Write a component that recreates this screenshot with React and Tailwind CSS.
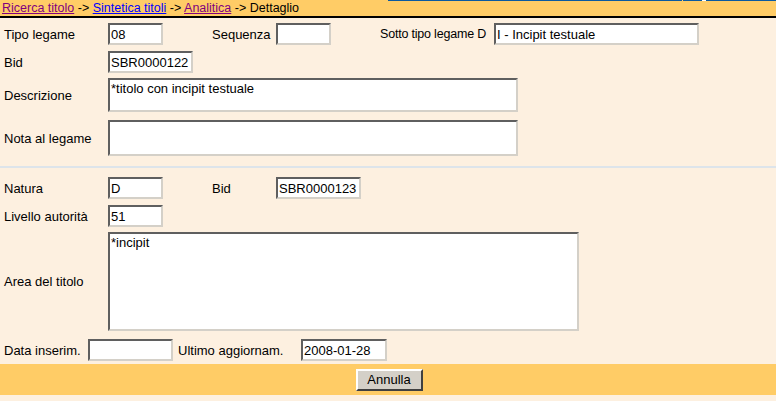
import React from "react";

const font = { fontFamily: '"Liberation Sans", Arial, sans-serif' };

function Input({ w, value, h = "h-[22px]" }) {
  return (
    <div
      className={`${w} ${h} shrink-0 bg-white border-2 border-t-[#5f5f5f] border-l-[#5f5f5f] border-b-[#d4d0c8] border-r-[#d4d0c8] flex items-center pl-[1px] text-[13px] text-black leading-none whitespace-nowrap overflow-hidden`}
    >
      {value}
    </div>
  );
}

function Area({ w, h, value }) {
  return (
    <div
      className={`${w} ${h} shrink-0 bg-white border-2 border-t-[#5f5f5f] border-l-[#5f5f5f] border-b-[#d4d0c8] border-r-[#d4d0c8] pl-[1px] pt-[1px] text-[13px] text-black leading-[15px]`}
    >
      {value}
    </div>
  );
}

function Label({ children, w = "w-[104px]" }) {
  return <div className={`${w} shrink-0 text-[13px] text-black leading-none whitespace-nowrap`}>{children}</div>;
}

export default function App() {
  return (
    <div className="w-[776px] h-[401px] bg-[#fdf0e0] overflow-hidden flex flex-col" style={font}>
      <div className="h-[18px] shrink-0 bg-[#ffcc66] border-b-2 border-black relative">
        <div className="absolute top-0 left-[388px] right-0 h-[1px] bg-[#0b5aa0]" />
        <div className="absolute top-0 left-[682px] w-[1px] h-[1px] bg-[#ffcc66]" />
        <div className="absolute top-0 left-[702px] w-[4px] h-[1px] bg-white" />
        <div className="pl-[2px] text-[12.5px] leading-[16px] text-black whitespace-nowrap">
          <span className="text-[#800080] underline">Ricerca titolo</span> -&gt;{" "}
          <span className="text-[#0000ff] underline">Sintetica titoli</span> -&gt;{" "}
          <span className="text-[#800080] underline">Analitica</span> -&gt; Dettaglio
        </div>
      </div>

      <div className="flex items-center mt-[5px] pl-[4px]">
        <Label>Tipo legame</Label>
        <Input w="w-[55px]" value="08" />
        <div className="w-[49px] shrink-0" />
        <Label w="w-[64px]">Sequenza</Label>
        <Input w="w-[55px]" value="" />
        <div className="w-[49px] shrink-0" />
        <Label w="w-[114px]">
          <span className="text-[12.5px] tracking-[-0.2px]">Sotto tipo legame D</span>
        </Label>
        <Input w="w-[205px]" value="I - Incipit testuale" />
      </div>

      <div className="flex items-center mt-[6px] pl-[4px]">
        <Label>Bid</Label>
        <Input w="w-[85px]" value="SBR0000122" />
      </div>

      <div className="flex items-center mt-[5px] pl-[4px]">
        <Label>Descrizione</Label>
        <Area w="w-[410px]" h="h-[34px]" value="*titolo con incipit testuale" />
      </div>

      <div className="flex items-center mt-[8px] pl-[4px]">
        <Label>Nota al legame</Label>
        <Area w="w-[410px]" h="h-[36px]" value="" />
      </div>

      <div className="mt-[10px] h-[2px] shrink-0 bg-[#dde4ea]" />

      <div className="flex items-center mt-[9px] pl-[4px]">
        <Label>Natura</Label>
        <Input w="w-[55px]" value="D" />
        <div className="w-[49px] shrink-0" />
        <Label w="w-[64px]">Bid</Label>
        <Input w="w-[85px]" value="SBR0000123" />
      </div>

      <div className="flex items-center mt-[6px] pl-[4px]">
        <Label>Livello autorità</Label>
        <Input w="w-[55px]" value="51" />
      </div>

      <div className="flex items-center mt-[5px] pl-[4px]">
        <Label>Area del titolo</Label>
        <Area w="w-[471px]" h="h-[99px]" value="*incipit" />
      </div>

      <div className="flex items-center mt-[8px] pl-[4px]">
        <Label w="w-[84px]">Data inserim.</Label>
        <Input w="w-[85px]" value="" />
        <div className="w-[5px] shrink-0" />
        <Label w="w-[123px]">Ultimo aggiornam.</Label>
        <Input w="w-[86px]" value="2008-01-28" />
      </div>

      <div className="mt-[3px] h-[31px] shrink-0 bg-[#ffcc66] flex items-center justify-center">
        <button
          className="w-[67px] h-[22px] ml-[2px] bg-[#d4d0c8] text-[13px] text-black leading-none border-2 border-t-white border-l-white border-b-[#404040] border-r-[#404040]"
          style={font}
        >
          Annulla
        </button>
      </div>
    </div>
  );
}
